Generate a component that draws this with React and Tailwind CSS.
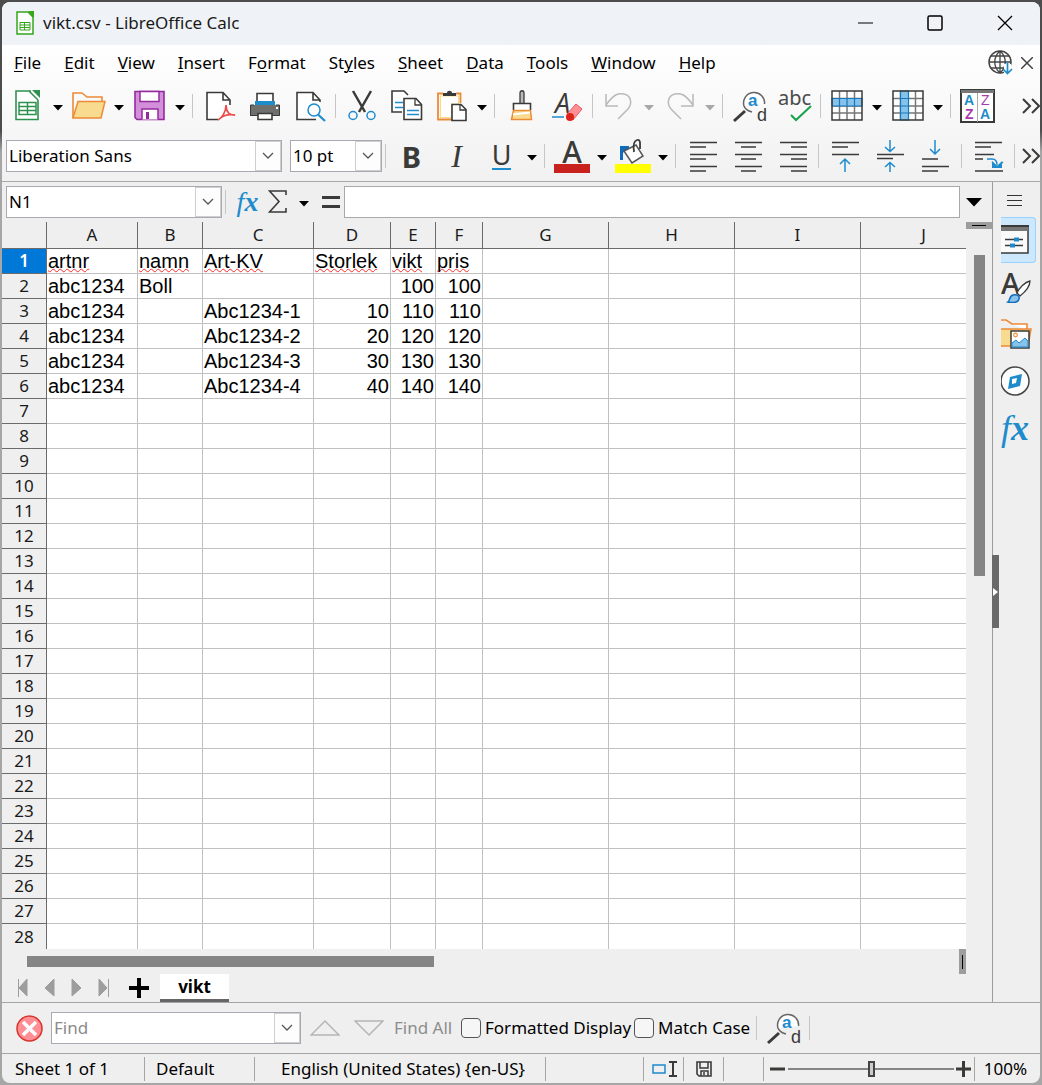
import React from 'react';

const DARK = '#3a3a38';
const BLUE = '#1e8bcd';

const Icon = ({ children, size = 32, className = '' }) => (
    <svg width={size} height={size} viewBox={`0 0 ${size} ${size}`} fill="none" className={`block shrink-0 ${className}`} aria-hidden="true">
        {children}
    </svg>
);

const CalcDocIcon = () => (
    <svg width="18" height="24" viewBox="0 0 18 24" fill="none" aria-hidden="true">
        <path d="M1 1h11l5 5v17H1z" fill="#fff" stroke="#35a61a" strokeWidth="1.5" />
        <path d="M12 0h6v7z" fill="#35a61a" />
        <path d="M4 11.5h10v7.5H4zM4 14h10M4 16.5h10M8.500 11.500v7.500" stroke="#35a61a" />
    </svg>
);

const NewIcon = () => (
    <Icon>
        <path d="M4 1.500h15l7 8v20H4z" fill="#fff" />
        <path d="M19 1H4v28.500h22V10" stroke="#2f9150" strokeWidth="1.600" />
        <path d="M20 0h8v8z" fill="#2f9150" />
        <path d="M17 1l9 9" stroke="#2f9150" strokeWidth="1.500" />
        <path d="M7 12.500h17v12H7zM7 16.500h17M7 20.500h17M15.500 12.500v12" stroke="#2f9150" strokeWidth="1.500" />
    </Icon>
);

const OpenIcon = () => (
    <svg width="34" height="32" viewBox="0 0 34 32" fill="none" aria-hidden="true">
        <path d="M1 28V3h9l5 4h15v4" stroke="#ec8b36" strokeWidth="1.600" />
        <path d="M6 11.500h27l-4 16.500H1z" fill="#f8db8f" stroke="#ec8b36" strokeWidth="1.500" />
    </svg>
);

const SaveIcon = () => (
    <Icon>
        <path d="M1 1.500h29v28H3l-2-2z" fill="#d38fda" stroke="#922b9c" strokeWidth="1.600" />
        <path d="M6 1.500h19v10H6z" fill="#fff" stroke="#922b9c" strokeWidth="1.500" />
        <path d="M8 29.500V19h16v10.500" fill="#fff" stroke="#922b9c" strokeWidth="1.500" />
        <path d="M12 22h3v7h-3z" fill="#922b9c" />
    </Icon>
);

const PdfIcon = () => (
    <Icon>
        <path d="M3 2.500h16l7 7v20H3z" fill="#fff" />
        <path d="M26 15V10l-7-7.500H3v27h11M19 3v7h7" stroke={DARK} strokeWidth="1.600" />
        <path d="M14 30c4-2 8-8 8-15 0 7 4 11 9 10-6-1-12 0-17 5z" stroke="#ee4b4b" strokeWidth="1.700" />
    </Icon>
);

const PrintIcon = () => (
    <Icon>
        <path d="M8 12V3.500h16V12" fill="#fff" stroke={DARK} strokeWidth="1.600" />
        <path d="M1 15h30v11H1z" fill="#6f6f6d" />
        <path d="M6 11h20v4H6z" fill={BLUE} />
        <path d="M5 15H1.500v10.500h29V15H27" stroke={DARK} strokeWidth="1" />
        <path d="M27 17h2v2h-2z" fill="#fff" />
        <path d="M9 23.500h14v6H9z" fill="#fff" stroke={DARK} strokeWidth="1.600" />
    </Icon>
);

const PreviewIcon = () => (
    <Icon>
        <path d="M3 2.500h16l7 7v20H3z" fill="#fff" />
        <path d="M26 12V10l-7-7.500H3v27h19M19 3v7h7" stroke={DARK} strokeWidth="1.600" />
        <circle cx="20" cy="20" r="6" fill="#fff" stroke={BLUE} strokeWidth="1.500" />
        <path d="M24 24.500l7 6.500" stroke={BLUE} strokeWidth="2.200" />
    </Icon>
);

const CutIcon = () => (
    <Icon>
        <path d="M7 1l12 21M25 1L13 22" stroke={DARK} strokeWidth="2.500" />
        <circle cx="7" cy="25.500" r="4" stroke={BLUE} strokeWidth="1.500" />
        <circle cx="25" cy="25.500" r="4" stroke={BLUE} strokeWidth="1.500" />
    </Icon>
);

const CopyIcon = () => (
    <Icon>
        <path d="M17 5l-4-4H1v21h10" fill="#fff" stroke={DARK} strokeWidth="1.600" />
        <path d="M4 12.500h8M4 17.500h8" stroke={BLUE} strokeWidth="1.500" />
        <path d="M13 8.500h12l5.500 6v15H13z" fill="#fff" stroke={DARK} strokeWidth="1.600" />
        <path d="M24 9v6h6" stroke={DARK} strokeWidth="1.300" />
        <path d="M16 20.500h12M16 24.500h12" stroke={BLUE} strokeWidth="1.500" />
    </Icon>
);

const PasteIcon = () => (
    <Icon>
        <path d="M7 3.500H2v26h14M20 3.500h4.500V13" stroke="#ec8b36" strokeWidth="1.800" />
        <path d="M4.500 6h18v8h-7v13.500h-11z" fill="#fff" stroke="#f8db8f" strokeWidth="1.200" />
        <path d="M7 6V3h4c0-3 5-3 5 0h4v3z" fill={DARK} />
        <path d="M16 14.500h9l5 5v11H16z" fill="#fff" stroke={DARK} strokeWidth="1.600" />
        <path d="M24 15v5h6" stroke={DARK} strokeWidth="1.300" />
    </Icon>
);

const BrushIcon = () => (
    <Icon>
        <path d="M14 13V3c0-3 4-3 4 0v10" fill="#bbb" stroke={DARK} strokeWidth="1.300" />
        <path d="M7.500 20v-6.500h17V20" fill="#fff" stroke={DARK} strokeWidth="1.600" />
        <path d="M7.500 20.500h17l1 9H5.500z" fill="#f8db8f" stroke="#ec8b36" strokeWidth="1.500" />
        <path d="M7 24.500l17-2" stroke="#fff" strokeWidth="2" />
    </Icon>
);

const ClearFormatIcon = () => (
    <Icon className="overflow-visible">
        <text x="4" y="23" fontSize="27" fontStyle="italic" fill={DARK} className="font-['Open_Sans',sans-serif]">A</text>
        <path d="M1 27h12" stroke={BLUE} strokeWidth="1.300" />
        <path d="M16 24l9-10 6 5-9 11z" fill="#ff8f95" stroke="#e75a60" />
        <circle cx="19" cy="27" r="4" fill="#dc2319" />
    </Icon>
);

const UndoIcon = ({ flip }) => (
    <Icon className={flip ? '-scale-x-100' : ''}>
        <path d="M3 4v12h12M3 15c8-11 12-12 18-11 8 2 8 10 4 15l-10 10" stroke="#b9b9b9" strokeWidth="1.500" />
    </Icon>
);

const FindReplaceIcon = () => (
    <Icon className="overflow-visible">
        <path d="M10 16a10.500 10.500 0 1 1 20.500-2M10 16c1 3 4 5 8 6" fill="#fff" stroke="#666" strokeWidth="1.500" />
        <path d="M0 31l11-10" stroke={DARK} strokeWidth="3" />
        <text x="14" y="16" fontSize="17" fontWeight="700" fill={BLUE} className="font-['Liberation_Sans',sans-serif]">a</text>
        <text x="23" y="31" fontSize="18" fill={DARK} className="font-['Liberation_Sans',sans-serif]">d</text>
    </Icon>
);

const SpellIcon = () => (
    <svg width="34" height="32" viewBox="0 0 34 32" fill="none" className="overflow-visible" aria-hidden="true">
        <text x="0" y="15" fontSize="20" fill="#4a4a4a" className="font-['Noto_Sans',sans-serif]">abc</text>
        <path d="M13 25l5 5 15-14" stroke="#18a24d" strokeWidth="2" />
    </svg>
);

const TableIcon = ({ column }) => (
    <Icon>
        <path d="M1 1h30v29H1z" fill="#fff" />
        <path d="M8.500 1v29M16 1v29M23.500 1v29M1 8.500h30M1 16h30M1 23h30" stroke="#777" strokeWidth="1.500" />
        {column ? (
            <path d="M8.500 1h8v29h-8zM8.500 8.500h8M8.500 16h8M8.500 23h8" fill="#87c2ea" stroke="#1478bd" strokeWidth="1.200" />
        ) : (
            <path d="M1 8.500h30V16H1zM8.500 8.500V16M16 8.500V16M23.500 8.500V16" fill="#87c2ea" stroke="#1478bd" strokeWidth="1.200" />
        )}
        <path d="M1 1h30v29H1z" stroke={DARK} strokeWidth="1.500" />
    </Icon>
);

const SortIcon = () => (
    <svg width="35" height="34" viewBox="0 0 35 34" fill="none" aria-hidden="true">
        <path d="M1 1h33v32H1z" fill="#fff" stroke={DARK} strokeWidth="2" />
        <path d="M1 1h33v3H1z" fill="#777" />
        <path d="M17.500 4v29" stroke="#aaa" />
        <g fontSize="14" className="font-['Liberation_Sans',sans-serif]">
            <text x="4" y="16" fill={BLUE} fontWeight="700">A</text>
            <text x="5" y="30" fill="#a63bb0" fontWeight="700">Z</text>
            <text x="21" y="16" fill="#a63bb0">Z</text>
            <text x="20" y="30" fill={BLUE} fontWeight="700">A</text>
        </g>
    </svg>
);

const alignPaths = {
    left: 'M3 2.500h27M3 7h16M3 14.500h27M3 19h16M3 26.500h27M3 31h16',
    center: 'M3 2.500h27M9 7h15M3 14.500h27M9 19h15M3 26.500h27M9 31h15',
    right: 'M3 2.500h27M14 7h16M3 14.500h27M14 19h16M3 26.500h27M14 31h16'
};

const AlignIcon = ({ kind }) => (
    <Icon>
        <path d={alignPaths[kind]} stroke={DARK} strokeWidth="1.500" />
    </Icon>
);

const TopIcon = () => (
    <Icon>
        <path d="M3 2.500h27M3 7h16M3 14.500h27" stroke={DARK} strokeWidth="1.500" />
        <path d="M16 32V19M11 24l5-5 5 5" stroke={BLUE} strokeWidth="1.500" />
    </Icon>
);

const MiddleIcon = () => (
    <Icon>
        <path d="M3 14.500h27M3 18.500h16" stroke={DARK} strokeWidth="1.500" />
        <path d="M16 0v11M11 7l5 4.500L21 7M16 33V22M11 27l5-4.500 5 4.500" stroke={BLUE} strokeWidth="1.500" />
    </Icon>
);

const BottomIcon = () => (
    <Icon>
        <path d="M3 19h16M3 26.500h27M3 31h16" stroke={DARK} strokeWidth="1.500" />
        <path d="M16 0v14M11 9l5 5 5-5" stroke={BLUE} strokeWidth="1.500" />
    </Icon>
);

const WrapIcon = () => (
    <Icon>
        <path d="M2 2.500h27M2 7h16M2 14.500h19M2 19h8M2 31h28" stroke={DARK} strokeWidth="1.500" />
        <path d="M14 19h5c4 0 5 2 5 6M19 22l5 5 6-5" stroke={BLUE} strokeWidth="1.500" />
        <path d="M19 21v7h10v-7l-5 5z" fill={BLUE} />
    </Icon>
);

const FontColorIcon = () => (
    <svg width="36" height="36" viewBox="0 0 36 36" fill="none" className="overflow-visible" aria-hidden="true">
        <text x="18" y="25" textAnchor="middle" fontSize="30" fontWeight="500" fill={DARK} className="font-['Noto_Sans',sans-serif]">A</text>
        <path d="M0 26h36v9H0z" fill="#c9211e" />
    </svg>
);

const FillColorIcon = () => (
    <svg width="36" height="36" viewBox="0 0 36 36" fill="none" aria-hidden="true">
        <path d="M5 22V8h9v4h-4l-2 3v7z" fill="#0f6cbd" />
        <path d="M9 13l12-6 7 11-11 7z" fill="#fff" stroke="#555" strokeWidth="1.500" />
        <path d="M19 14c-1-6 0-11 3-12 4-1 3 4 3 9" stroke={DARK} strokeWidth="1.800" />
        <path d="M0 26h36v9H0z" fill="#ff0" />
    </svg>
);

const Fx = ({ size }) => (
    <span className={`font-['Liberation_Serif',serif] italic leading-none text-[#1e8bcd] ${size}`}>f<b>x</b></span>
);

const Arrow = ({ muted }) => (
    <svg width="10" height="6" viewBox="0 0 10 6" aria-hidden="true">
        <path d="M0 0h10L5 5.500z" fill={muted ? '#a8a8a8' : '#000'} />
    </svg>
);

const Chevron = () => (
    <svg width="12" height="8" viewBox="0 0 12 8" fill="none" aria-hidden="true">
        <path d="M1 1l5 5 5-5" stroke="#555" strokeWidth="1.300" />
    </svg>
);

const MoreIcon = () => (
    <svg width="18" height="16" viewBox="0 0 18 16" fill="none" aria-hidden="true">
        <path d="M1 1l7 7-7 7M10 1l7 7-7 7" stroke={DARK} strokeWidth="2" />
    </svg>
);

const ToolButton = ({ label, children }) => (
    <button aria-label={label} className="flex h-9 w-[45px] shrink-0 items-center justify-center">{children}</button>
);

const DropButton = ({ label, muted }) => (
    <button aria-label={`${label} options`} className="flex h-9 w-4 shrink-0 items-center justify-center pt-1"><Arrow muted={muted} /></button>
);

const Sep = ({ wide }) => (
    <div className={`flex shrink-0 justify-center ${wide ? 'w-[9px]' : 'w-[7px]'}`}>
        <div className="h-6 w-px bg-[#c6c6c6]" />
    </div>
);

const standardTools = [
    { label: 'New', icon: <NewIcon />, drop: true },
    { label: 'Open', icon: <OpenIcon />, drop: true },
    { label: 'Save', icon: <SaveIcon />, drop: true },
    'wide',
    { label: 'Export as PDF', icon: <PdfIcon /> },
    { label: 'Print', icon: <PrintIcon /> },
    { label: 'Print Preview', icon: <PreviewIcon /> },
    'sep',
    { label: 'Cut', icon: <CutIcon /> },
    { label: 'Copy', icon: <CopyIcon /> },
    { label: 'Paste', icon: <PasteIcon />, drop: true },
    'wide',
    { label: 'Clone Formatting', icon: <BrushIcon /> },
    { label: 'Clear Formatting', icon: <ClearFormatIcon /> },
    'sep',
    { label: 'Undo', icon: <UndoIcon />, drop: true, muted: true },
    { label: 'Redo', icon: <UndoIcon flip />, drop: true, muted: true },
    'wide',
    { label: 'Find and Replace', icon: <FindReplaceIcon /> },
    { label: 'Spelling', icon: <SpellIcon /> },
    'sep',
    { label: 'Row', icon: <TableIcon />, drop: true },
    { label: 'Column', icon: <TableIcon column />, drop: true },
    'wide',
    { label: 'Sort', icon: <SortIcon /> }
];

const formatTools = [
    { label: 'Bold', icon: <span className="text-[29px] font-bold leading-none text-[#3a3a38]">B</span> },
    { label: 'Italic', icon: <span className="font-['Liberation_Serif',serif] text-[32px] italic leading-none text-[#3a3a38]">I</span> },
    { label: 'Underline', icon: <span className="border-b-2 border-[#1e8bcd] text-[27px] leading-[26px] text-[#3a3a38]">U</span>, drop: true },
    'wide',
    { label: 'Font Color', icon: <FontColorIcon />, drop: true },
    { label: 'Background Color', icon: <FillColorIcon />, drop: true },
    'wide',
    { label: 'Align Left', icon: <AlignIcon kind="left" /> },
    { label: 'Align Center', icon: <AlignIcon kind="center" /> },
    { label: 'Align Right', icon: <AlignIcon kind="right" /> },
    'sep',
    { label: 'Align Top', icon: <TopIcon /> },
    { label: 'Center Vertically', icon: <MiddleIcon /> },
    { label: 'Align Bottom', icon: <BottomIcon /> },
    'wide',
    { label: 'Wrap Text', icon: <WrapIcon /> },
    'sep'
];

const Tools = ({ items }) => items.map((item, i) => {
    if (typeof item === 'string') return <Sep key={i} wide={item === 'wide'} />;
    return (
        <React.Fragment key={i}>
            <ToolButton label={item.label}>{item.icon}</ToolButton>
            {item.drop && <DropButton label={item.label} muted={item.muted} />}
        </React.Fragment>
    );
});

const SelectBox = ({ label, value, className }) => (
    <div className={`relative h-8 shrink-0 border border-[#a9a9b1] bg-white ${className}`}>
        <select aria-label={label} className="h-full w-full appearance-none bg-transparent pl-[2px] outline-none">
            <option>{value}</option>
        </select>
        <div className="pointer-events-none absolute inset-y-0 right-0 flex w-[26px] items-center justify-center border border-[#cfcfcf] bg-[#fdfdfd]">
            <Chevron />
        </div>
    </div>
);

const ComboBox = ({ label, value, placeholder, className }) => (
    <div className={`flex h-8 shrink-0 border border-[#a9a9b1] bg-white ${className}`}>
        <input aria-label={label} defaultValue={value} placeholder={placeholder} className="min-w-0 flex-1 bg-transparent pl-[2px] outline-none placeholder:text-[#8a8a8a]" />
        <button aria-label={`${label} list`} className="flex w-[26px] items-center justify-center border border-[#cfcfcf] bg-[#fdfdfd]">
            <Chevron />
        </button>
    </div>
);

const menus = [
    ['', 'F', 'ile'],
    ['', 'E', 'dit'],
    ['', 'V', 'iew'],
    ['', 'I', 'nsert'],
    ['F', 'o', 'rmat'],
    ['St', 'y', 'les'],
    ['', 'S', 'heet'],
    ['', 'D', 'ata'],
    ['', 'T', 'ools'],
    ['', 'W', 'indow'],
    ['', 'H', 'elp']
];

const columns = [
    { name: 'A', width: 91 },
    { name: 'B', width: 65 },
    { name: 'C', width: 111 },
    { name: 'D', width: 77 },
    { name: 'E', width: 45 },
    { name: 'F', width: 47 },
    { name: 'G', width: 126 },
    { name: 'H', width: 126 },
    { name: 'I', width: 126 },
    { name: 'J', width: 126 }
];

const data = [
    ['artnr', 'namn', 'Art-KV', 'Storlek', 'vikt', 'pris'],
    ['abc1234', 'Boll', '', '', 100, 100],
    ['abc1234', '', 'Abc1234-1', 10, 110, 110],
    ['abc1234', '', 'Abc1234-2', 20, 120, 120],
    ['abc1234', '', 'Abc1234-3', 30, 130, 130],
    ['abc1234', '', 'Abc1234-4', 40, 140, 140]
];

const rowNumbers = Array.from({ length: 28 }, (_, i) => i + 1);

const TitleBar = () => (
    <header className="flex h-[43px] shrink-0 items-center bg-[#eff3f7] pb-[2px] pl-[14px]">
        <CalcDocIcon />
        <h1 className="ml-[9px] flex-1 text-[#1a1a1a]">vikt.csv - LibreOffice Calc</h1>
        <button aria-label="Minimize" className="flex h-full w-[70px] items-center justify-center">
            <Icon size={16}><path d="M1 8h15" stroke="#000" strokeWidth="1.200" /></Icon>
        </button>
        <button aria-label="Maximize" className="flex h-full w-[70px] items-center justify-center">
            <Icon size={16}><rect x="1" y="1" width="14" height="14" rx="1.500" stroke="#000" strokeWidth="1.500" /></Icon>
        </button>
        <button aria-label="Close" className="flex h-full w-[70px] items-center justify-center">
            <Icon size={16}><path d="M1 1l14 14M15 1L1 15" stroke="#000" strokeWidth="1.300" /></Icon>
        </button>
    </header>
);

const MenuBar = () => (
    <nav className="flex h-9 items-center">
        {menus.map(([before, key, after]) => (
            <button key={before + key + after} className="pl-3 pr-[11px]">
                {before}<span className="underline decoration-1 underline-offset-2">{key}</span>{after}
            </button>
        ))}
        <button aria-label="Check for updates" className="ml-auto mr-[7px]">
            <Icon size={26}>
                <circle cx="12" cy="12" r="11" stroke="#444" strokeWidth="1.500" />
                <path d="M1 12h22M3 6h18M3 18h13M12 1v22M12 1c-7 6-7 16 0 22M12 1c7 6 7 16 0 22" stroke="#444" strokeWidth="1.300" />
                <path d="M16 14h7v10h-7z" fill="#fff" />
                <path d="M19.500 12v11M15 19l4.500 4.500L24 19" stroke={BLUE} strokeWidth="1.700" />
            </Icon>
        </button>
        <button aria-label="Close document" className="mr-[7px]">
            <Icon size={12}><path d="M0 0l12 12M12 0L0 12" stroke="#444" strokeWidth="1.500" /></Icon>
        </button>
    </nav>
);

const Grid = () => (
    <div className="min-w-0 flex-1 overflow-hidden bg-white">
        <table className="w-[985px] table-fixed border-separate border-spacing-0">
            <colgroup>
                <col className="w-[45px]" />
                {columns.map((c) => <col key={c.name} style={{ width: c.width }} />)}
            </colgroup>
            <thead>
                <tr>
                    <th aria-label="Select all" className="h-[27px] border-b border-r border-[#6b6b6b] bg-[#efefef] p-0" />
                    {columns.map((c) => (
                        <th key={c.name} scope="col" className="h-[27px] border-b border-r border-[#6b6b6b] bg-[#efefef] p-0 font-normal leading-6 text-[#1a1a1a]">
                            {c.name}
                        </th>
                    ))}
                </tr>
            </thead>
            <tbody>
                {rowNumbers.map((n, r) => {
                    const edges = n === rowNumbers.length ? 'border-r' : 'border-b border-r';
                    return (
                        <tr key={n}>
                            <th
                                scope="row"
                                className={`h-[25px] border-[#6b6b6b] p-0 leading-6 ${edges} ${n === 1 ? 'bg-[#0078d7] font-semibold text-white' : 'bg-[#efefef] font-normal text-[#1a1a1a]'}`}
                            >
                                {n}
                            </th>
                            {columns.map((c, i) => {
                                const value = data[r]?.[i] ?? '';
                                const align = typeof value === 'number' ? 'text-right' : 'text-left';
                                return (
                                    <td key={c.name} className={`h-[25px] whitespace-nowrap border-[#c0c0c0] px-px py-0 font-['Liberation_Sans',Arial,sans-serif] text-[20px] leading-6 ${edges} ${align}`}>
                                        {r === 0 && value ? (
                                            <span className="underline decoration-[#ff2a2a] decoration-wavy decoration-1 underline-offset-0 [text-decoration-skip-ink:none]">{value}</span>
                                        ) : value}
                                    </td>
                                );
                            })}
                        </tr>
                    );
                })}
            </tbody>
        </table>
    </div>
);

const FormulaBar = () => (
    <div className="flex h-10 shrink-0 items-center pl-1">
        <ComboBox label="Name Box" value="N1" className="w-[216px]" />
        <Sep />
        <button aria-label="Function Wizard" className="w-[37px] text-center"><Fx size="text-[28px]" /></button>
        <button aria-label="Select Function" className="flex w-6 justify-center">
            <svg width="20" height="24" viewBox="0 0 20 24" fill="none" aria-hidden="true">
                <path d="M18 5V1H1.500L11 11.500 1.500 22H18v-4" stroke={DARK} strokeWidth="1.600" />
            </svg>
        </button>
        <button aria-label="Select Function options" className="flex w-7 justify-center pt-1"><Arrow /></button>
        <button aria-label="Formula" className="flex w-[26px] justify-center">
            <svg width="18" height="14" viewBox="0 0 18 14" aria-hidden="true">
                <path d="M0 1h18v3H0zM0 10h18v3H0z" fill={DARK} />
            </svg>
        </button>
        <input aria-label="Input line" className="h-8 min-w-0 flex-1 border border-[#a9a9a9] bg-white px-1 outline-none" />
        <button aria-label="Expand Formula Bar" className="flex w-8 justify-center pr-1">
            <svg width="16" height="9" viewBox="0 0 16 9" aria-hidden="true"><path d="M0 0h16L8 8.500z" /></svg>
        </button>
    </div>
);

const sideTabs = [
    {
        label: 'Properties',
        icon: (
            <>
                <path d="M-4 2h31v27H-4z" fill="#fafafa" stroke={DARK} strokeWidth="1.500" />
                <path d="M0 2h27v5H0z" fill="#777" />
                <path d="M0 2h28" stroke={DARK} strokeWidth="2" />
                <path d="M4 15.500h18M4 21.500h18" stroke={DARK} strokeWidth="1.300" />
                <path d="M13 13.500h5v4h-5zM9 19.500h5v4H9z" fill={BLUE} />
            </>
        )
    },
    {
        label: 'Styles',
        icon: (
            <>
                <text x="0" y="23" fontSize="29" fontWeight="500" fill={DARK} className="font-['Noto_Sans',sans-serif]">A</text>
                <path d="M16 22c2-5 8-11 13-12 0 5-5 11-10 15z" fill="#fff" stroke={DARK} strokeWidth="1.300" />
                <path d="M7 31c2-1 1-6 5-7 4-1 7 1 6 4-1 4-7 4-11 3z" fill="#87c2ea" stroke="#0f6cbd" strokeWidth="1.500" />
            </>
        )
    },
    {
        label: 'Gallery',
        icon: (
            <>
                <path d="M0 2h5l6 4h15v6" fill="#fff" stroke="#ec8b36" strokeWidth="1.600" />
                <path d="M-1 11h31l-3 17H-1z" fill="#f8db8f" stroke="#ec8b36" strokeWidth="1.500" />
                <path d="M10 13h18v17H10z" fill="#fff" stroke={DARK} strokeWidth="1.500" />
                <circle cx="14.500" cy="17" r="1.800" stroke="#ec8b36" strokeWidth="1.200" />
                <path d="M11 29v-4l4-3 3 3 6-5 3 3v6z" fill="#87c2ea" stroke={BLUE} />
            </>
        )
    },
    {
        label: 'Navigator',
        icon: (
            <>
                <circle cx="14" cy="16" r="14" fill="#fdfdfd" stroke="#444" strokeWidth="1.500" />
                <path d="M21 9l-12 3-2 12 12-3z" fill={BLUE} />
                <path d="M11 14l5-1-1 5-4 1z" fill="#fff" />
            </>
        )
    },
    { label: 'Functions' }
];

const Sidebar = () => (
    <aside className="relative flex w-[48px] shrink-0 flex-col border-l border-[#9c9c9c] pl-2">
        <button aria-label="Sidebar Settings" className="flex h-[35px] items-center pl-[6px]">
            <Icon size={16}><path d="M0 3.500h15M0 8.500h15M0 13.500h15" stroke="#333" strokeWidth="1.200" /></Icon>
        </button>
        {sideTabs.map((tab, i) => (
            <button
                key={tab.label}
                aria-label={tab.label}
                className={`mb-[1px] flex h-[46px] w-[35px] items-center rounded-r ${i === 0 ? 'border border-l-0 border-[#99d1ff] bg-[#cce8ff]' : ''}`}
            >
                {tab.icon ? <Icon>{tab.icon}</Icon> : <Fx size="text-[36px]" />}
            </button>
        ))}
        <button aria-label="Hide sidebar" className="absolute left-[-1px] top-[373px] flex h-[73px] w-[7px] items-center bg-[#696969]">
            <svg width="6" height="8" viewBox="0 0 6 8" aria-hidden="true"><path d="M1 0v8l5-4z" fill="#fff" /></svg>
        </button>
    </aside>
);

const navArrows = [
    { label: 'First sheet', d: 'M1.500 1v18M10 1v17L2 10z' },
    { label: 'Previous sheet', d: 'M10 1v17L1 10z' },
    { label: 'Next sheet', d: 'M1 1v17l9-8z' },
    { label: 'Last sheet', d: 'M1 1v17l8-8zM10.500 1v18' }
];

const SheetTabs = () => (
    <div className="flex h-7 shrink-0 items-stretch pl-[7px]">
        {navArrows.map((a) => (
            <button key={a.label} aria-label={a.label} className="flex w-[27px] items-center justify-center">
                <svg width="12" height="20" viewBox="0 0 12 20" aria-hidden="true">
                    <path d={a.d} fill="#9d9d9d" stroke="#9d9d9d" strokeWidth="1" />
                </svg>
            </button>
        ))}
        <button aria-label="Add sheet" className="flex w-[43px] items-center justify-center">
            <svg width="20" height="20" viewBox="0 0 20 20" aria-hidden="true"><path d="M8 0h4v8h8v4h-8v8H8v-8H0V8h8z" /></svg>
        </button>
        <button className="w-[69px] border-b-[3px] border-[#666] bg-white font-bold leading-6">vikt</button>
    </div>
);

const FindBar = () => (
    <div className="flex h-[51px] shrink-0 items-center border-t border-[#a5a5a5] pl-[14px]">
        <button aria-label="Close Find Bar" className="mr-2">
            <Icon size={27}>
                <circle cx="13.500" cy="13.500" r="12.500" fill="#ff8e95" stroke="#d8332b" strokeWidth="1.500" />
                <path d="M7 7l13 13M20 7L7 20" stroke="#fff" strokeWidth="3.500" />
            </Icon>
        </button>
        <ComboBox label="Find" placeholder="Find" className="w-[250px]" />
        <button aria-label="Find Previous" className="ml-[9px]">
            <svg width="30" height="18" viewBox="0 0 30 18" fill="none" aria-hidden="true"><path d="M1 16h28L15 2z" stroke="#b5b5b5" strokeWidth="1.500" /></svg>
        </button>
        <button aria-label="Find Next" className="ml-[14px]">
            <svg width="30" height="18" viewBox="0 0 30 18" fill="none" aria-hidden="true"><path d="M1 2h28L15 16z" stroke="#b5b5b5" strokeWidth="1.500" /></svg>
        </button>
        <button className="ml-[10px] w-[67px] whitespace-nowrap text-left text-[#8d8d8d]">Find All</button>
        <label className="flex w-[173px] items-center gap-1 whitespace-nowrap">
            <input type="checkbox" className="size-5 shrink-0 appearance-none rounded border border-[#555] bg-[#f6f6f6]" />
            Formatted Display
        </label>
        <label className="flex w-[118px] items-center gap-1 whitespace-nowrap">
            <input type="checkbox" className="size-5 shrink-0 appearance-none rounded border border-[#555] bg-[#f6f6f6]" />
            Match Case
        </label>
        <Sep wide />
        <ToolButton label="Find and Replace"><FindReplaceIcon /></ToolButton>
        <Sep />
    </div>
);

const StatusBar = () => (
    <footer className="flex h-[30px] shrink-0 items-center border-t border-[#a5a5a5] whitespace-nowrap">
        <div className="h-6 w-[143px] border-r border-[#a5a5a5] pl-[13px] leading-6">Sheet 1 of 1</div>
        <div className="h-6 w-[110px] border-r border-[#a5a5a5] pl-[11px] leading-6">Default</div>
        <div className="h-6 w-[291px] border-r border-[#a5a5a5] pl-[26px] leading-6">English (United States) {'{en-US}'}</div>
        <div className="h-6 min-w-0 flex-1 border-r border-[#a5a5a5]" />
        <div className="flex h-6 w-10 items-center justify-center border-r border-[#a5a5a5]">
            <svg width="26" height="18" viewBox="0 0 26 18" fill="none" aria-hidden="true">
                <path d="M2 5h12v8H2z" stroke={BLUE} strokeWidth="1.500" />
                <path d="M18 2h8M18 16h8M22 2v14" stroke={DARK} strokeWidth="2" />
            </svg>
        </div>
        <div className="flex h-6 w-10 items-center justify-center border-r border-[#a5a5a5]">
            <Icon size={16}>
                <path d="M1 1h14v14H3l-2-2z" stroke={DARK} strokeWidth="1.600" />
                <path d="M4 1v6h8V1M5 15v-5h7v5M8 11v3" stroke={DARK} strokeWidth="1.500" />
            </Icon>
        </div>
        <div className="h-6 w-10 border-r border-[#a5a5a5]" />
        <div className="flex h-6 w-[211px] items-center border-r border-[#a5a5a5] pl-[6px]">
            <button aria-label="Zoom out"><Icon size={16}><path d="M0 8h15" stroke={DARK} strokeWidth="3" /></Icon></button>
            <input
                type="range"
                aria-label="Zoom"
                defaultValue="50"
                className="mx-[2px] h-4 min-w-0 flex-1 appearance-none bg-transparent [&::-webkit-slider-runnable-track]:h-[2px] [&::-webkit-slider-runnable-track]:bg-[#858585] [&::-webkit-slider-thumb]:-mt-[7px] [&::-webkit-slider-thumb]:h-4 [&::-webkit-slider-thumb]:w-[7px] [&::-webkit-slider-thumb]:appearance-none [&::-webkit-slider-thumb]:border-2 [&::-webkit-slider-thumb]:border-[#444] [&::-webkit-slider-thumb]:bg-[#ccc]"
            />
            <button aria-label="Zoom in" className="mr-[2px]"><Icon size={16}><path d="M0 8h15M7.500 0v16" stroke={DARK} strokeWidth="3" /></Icon></button>
        </div>
        <button className="h-6 w-[65px] pr-1 text-center leading-6">100%</button>
    </footer>
);

const App = () => {
    return (
        <div className="flex min-h-screen flex-col bg-linear-to-b from-[#4c4c4c] from-[12%] to-[#a6a6a6] to-[14%] p-[2px] font-['Noto_Sans','Segoe_UI',sans-serif] text-[17px] leading-6 text-black">
            <div className="flex flex-1 flex-col overflow-hidden rounded-lg bg-[#efefef]">
                <TitleBar />

                <div className="flex h-[137px] shrink-0 flex-col border-b border-[#a9a9a9] bg-linear-to-b from-white to-[#f1f1f1]">
                    <MenuBar />
                    <div className="flex h-[50px] items-center pl-[3px]">
                        <Tools items={standardTools} />
                        <button aria-label="More standard tools" className="ml-auto"><MoreIcon /></button>
                    </div>
                    <div className="flex h-[50px] items-center pl-1">
                        <SelectBox label="Font Name" value="Liberation Sans" className="mr-2 w-[276px]" />
                        <SelectBox label="Font Size" value="10 pt" className="w-[92px]" />
                        <Sep />
                        <Tools items={formatTools} />
                        <button aria-label="More formatting tools" className="ml-auto"><MoreIcon /></button>
                    </div>
                </div>

                <main className="flex flex-1">
                    <div className="flex min-w-0 flex-1 flex-col">
                        <FormulaBar />
                        <div className="flex flex-1">
                            <Grid />
                            <div className="flex w-[26px] shrink-0 flex-col items-center">
                                <div className="flex h-[7px] w-full items-center justify-center bg-[#9d9d9d]">
                                    <div className="h-px w-[14px] bg-black" />
                                </div>
                                <div className="mt-[26px] h-[321px] w-[11px] bg-[#858585]" />
                            </div>
                        </div>
                        <div className="flex h-[25px] shrink-0 items-center justify-between pl-[25px] pr-[26px]">
                            <div className="h-[11px] w-[407px] bg-[#858585]" />
                            <div className="flex h-full w-[7px] items-center justify-center bg-[#9d9d9d]">
                                <div className="h-[14px] w-px bg-black" />
                            </div>
                        </div>
                        <SheetTabs />
                    </div>
                    <Sidebar />
                </main>

                <FindBar />
                <StatusBar />
            </div>
        </div>
    );
};

export default App;
